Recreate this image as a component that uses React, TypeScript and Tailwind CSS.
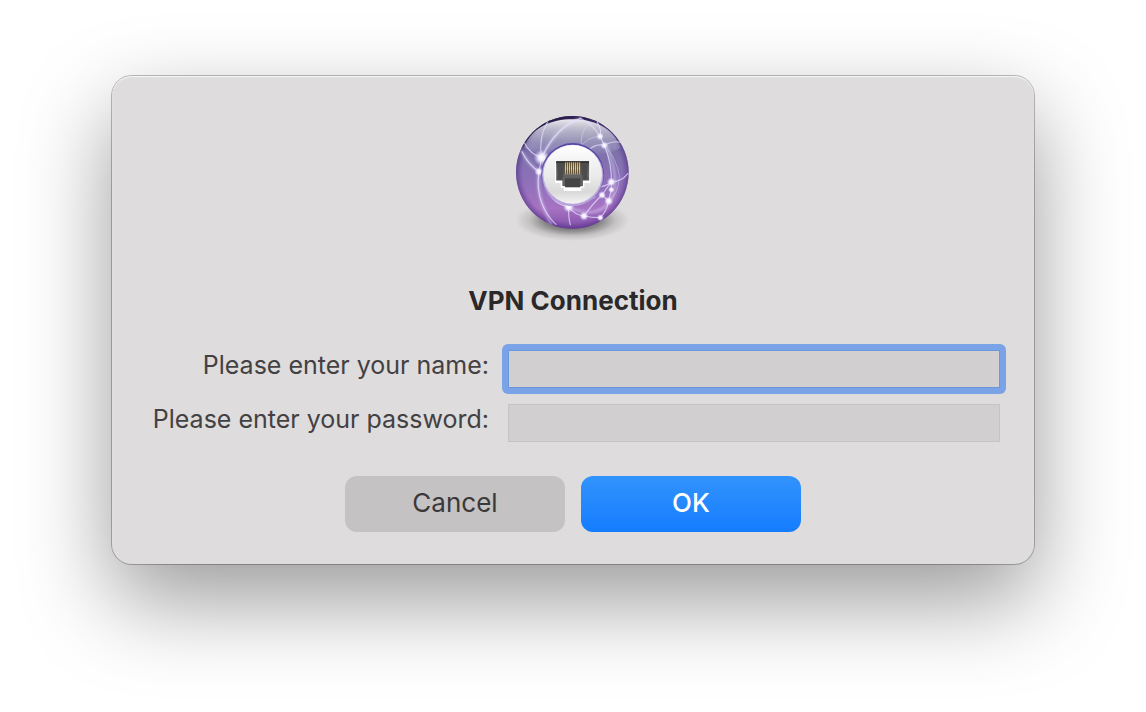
import React, { useState } from 'react';

const NetworkIcon: React.FC = () => (
  <svg viewBox="3 -3 432 432" className="w-36 h-36" aria-hidden="true">
    <defs>
      <linearGradient id="ball" x1="0" y1="0" x2="0" y2="1">
        <stop offset="0" stopColor="#15132c" />
        <stop offset="0.1" stopColor="#38355c" />
        <stop offset="0.28" stopColor="#7a72a8" />
        <stop offset="0.55" stopColor="#8c70b8" />
        <stop offset="0.82" stopColor="#a673c2" />
        <stop offset="1" stopColor="#8350ab" />
      </linearGradient>
      <radialGradient id="rim" cx="0.5" cy="0.5" r="0.5">
        <stop offset="0.88" stopColor="#5d3a90" stopOpacity="0" />
        <stop offset="1" stopColor="#4d2c80" stopOpacity="0.6" />
      </radialGradient>
      <linearGradient id="gloss" x1="0" y1="0" x2="0" y2="1">
        <stop offset="0" stopColor="#fff" stopOpacity="0.9" />
        <stop offset="0.5" stopColor="#e4e2f2" stopOpacity="0.55" />
        <stop offset="1" stopColor="#c9c4e6" stopOpacity="0.05" />
      </linearGradient>
      <linearGradient id="plate" x1="0" y1="0" x2="0" y2="1">
        <stop offset="0" stopColor="#ffffff" />
        <stop offset="0.55" stopColor="#e9e9ea" />
        <stop offset="0.8" stopColor="#d9d9da" />
        <stop offset="1" stopColor="#f4f4f4" />
      </linearGradient>
      <linearGradient id="socket" x1="0" y1="0" x2="0" y2="1">
        <stop offset="0" stopColor="#4a4a4a" />
        <stop offset="0.5" stopColor="#6c6c6c" />
        <stop offset="1" stopColor="#4d4d4d" />
      </linearGradient>
      <linearGradient id="pin" x1="0" y1="0" x2="0" y2="1">
        <stop offset="0" stopColor="#e0a233" />
        <stop offset="0.5" stopColor="#f6cf70" />
        <stop offset="1" stopColor="#d09232" />
      </linearGradient>
      <radialGradient id="node">
        <stop offset="0" stopColor="#fff" />
        <stop offset="0.4" stopColor="#f6f2ff" stopOpacity="0.95" />
        <stop offset="1" stopColor="#e0d8ff" stopOpacity="0" />
      </radialGradient>
      <radialGradient id="ground">
        <stop offset="0" stopColor="#000" stopOpacity="0.7" />
        <stop offset="0.5" stopColor="#000" stopOpacity="0.38" />
        <stop offset="0.75" stopColor="#000" stopOpacity="0.12" />
        <stop offset="1" stopColor="#000" stopOpacity="0" />
      </radialGradient>
      <clipPath id="ballClip">
        <circle cx="217" cy="202" r="169" />
      </clipPath>
      <filter id="soft" x="-20%" y="-20%" width="140%" height="140%">
        <feGaussianBlur stdDeviation="3" />
      </filter>
    </defs>

    <ellipse cx="217" cy="346" rx="172" ry="62" fill="url(#ground)" />
    <circle cx="217" cy="202" r="169" fill="url(#ball)" />
    <circle cx="217" cy="202" r="169" fill="url(#rim)" />
    <g clipPath="url(#ballClip)">
      <path d="M48 33h338v70Q300 32 217 34T64 130Z" fill="#131129" fillOpacity="0.7" filter="url(#soft)" />
      <path d="M72 128C96 66 154 43 217 43s121 23 145 85c-45 28-96 20-145 16-50-4-100 12-145-16Z" fill="url(#gloss)" />

      {/* links between the nodes */}
      <g fill="none" stroke="#e6e0ff" strokeLinecap="round">
        <g strokeWidth="9" strokeOpacity="0.4" filter="url(#soft)">
          <path d="M125 158C150 105 185 58 242 40" />
          <path d="M117 200C105 270 140 325 153 358" />
          <path d="M66 140Q84 178 117 200" />
          <path d="M206 306Q290 345 330 288Q365 235 320 125" />
        </g>
        <g strokeWidth="3.5" strokeOpacity="0.75">
          <path d="M125 158C118 120 126 80 142 52" />
          <path d="M125 158C150 105 185 58 242 40" />
          <path d="M125 158Q90 148 72 112" />
          <path d="M125 158L117 200" />
          <path d="M66 140Q84 178 117 200" />
          <path d="M117 200C106 270 132 325 168 358" />
          <path d="M128 215C130 260 160 296 206 306" />
          <path d="M300 94Q276 55 240 40" />
          <path d="M300 94Q306 76 292 52" />
          <path d="M300 94L313 121" />
          <path d="M313 121Q285 114 264 138" />
          <path d="M313 121Q340 106 362 112" />
          <path d="M313 121Q336 175 334 231" />
          <path d="M334 231Q365 230 384 205" />
          <path d="M334 231Q318 245 290 246" />
          <path d="M334 231L334 254L326 288" />
          <path d="M334 231L306 270L326 288" />
          <path d="M306 270Q280 294 252 333" />
          <path d="M206 306Q224 330 252 333" />
          <path d="M206 306Q205 340 211 359" />
          <path d="M252 333Q275 338 300 338" />
          <path d="M326 288Q320 320 300 338" />
        </g>
        <g strokeWidth="2.5" strokeOpacity="0.5">
          <path d="M244 124Q240 75 270 54" />
          <path d="M300 94Q260 96 244 124" />
          <path d="M313 121Q350 160 358 212Q356 270 326 288" />
          <path d="M164 288Q205 325 288 276" />
        </g>
      </g>

      <g fill="url(#node)">
        <circle cx="125" cy="158" r="24" />
        <circle cx="117" cy="200" r="14" />
        <circle cx="300" cy="94" r="12" />
        <circle cx="313" cy="121" r="12" />
        <circle cx="334" cy="231" r="14" />
        <circle cx="334" cy="254" r="10" />
        <circle cx="306" cy="270" r="12" />
        <circle cx="326" cy="288" r="14" />
        <circle cx="206" cy="306" r="17" />
        <circle cx="252" cy="333" r="14" />
        <circle cx="301" cy="338" r="11" />
      </g>
    </g>

    {/* ethernet socket */}
    <circle cx="218" cy="208" r="94" fill="#5748a6" />
    <circle cx="218" cy="211" r="92" fill="#b9a4dc" />
    <circle cx="218" cy="208" r="88" fill="url(#plate)" />
    <path d="M165 168h106v66h-18v14h-9v10h-53v-10h-9v-14h-17Z" fill="#fff" />
    <path d="M168 168h100v59h-19v17h-9v4h-44v-4h-8v-17h-20Z" fill="#b5b5b5" />
    <path d="M169 169h98v57h-19v17h-8v3h-44v-3h-8v-17h-19Z" fill="url(#socket)" />
    <path d="M169 169h98v5h-98Z" fill="#333" />
    <path d="M173 174h18v50h-18Zm71 0h18v50h-18Z" fill="#4c4c4c" />
    <path d="M188 210h60v32h-60Z" fill="#626262" />
    <path d="M195 220h46v26h-46Z" fill="#454545" />
    <path d="M194 172h48v34h-48Z" fill="#4b4232" />
    {[195, 201, 207, 213, 219, 225, 231, 237].map(x => (
      <rect key={x} x={x} y="172" width="3.5" height="36" fill="url(#pin)" />
    ))}
  </svg>
);

interface FieldProps {
  id: string;
  label: string;
  type: string;
  value: string;
  onChange: (value: string) => void;
  autoFocus?: boolean;
}

const Field: React.FC<FieldProps> = ({ id, label, type, value, onChange, autoFocus }) => (
  <>
    <label htmlFor={id} className="text-right text-[25px] leading-[30px] whitespace-nowrap text-[#434142]">
      {label}
    </label>
    <div className="-m-1.5 p-1.5 rounded-md focus-within:bg-[#79a3e6]">
      <input
        id={id}
        type={type}
        value={value}
        autoFocus={autoFocus}
        onChange={(e) => onChange(e.target.value)}
        className="block w-full h-[38px] px-2 bg-[#d1cfd0] border border-[#c5c3c4] text-[#2a2829] caret-transparent outline-none focus:border-[#6b97dd]"
      />
    </div>
  </>
);

export default function App() {
  const [name, setName] = useState('');
  const [password, setPassword] = useState('');

  return (
    <main className="min-h-screen bg-white px-28 pt-[76px] pb-36 font-['Inter',sans-serif] text-[26px]">
      <form
        role="dialog"
        aria-labelledby="vpn-title"
        onSubmit={(e) => e.preventDefault()}
        className="flex flex-col items-center px-[34px] pt-7 pb-8 rounded-[20px] bg-[#dedcdd] shadow-[inset_0_1px_1px_rgba(255,255,255,0.8),0_0_0_1px_rgba(0,0,0,0.25),0_36px_90px_rgba(0,0,0,0.4)]"
      >
        <NetworkIcon />
        <h1 id="vpn-title" className="mt-9 leading-[34px] font-bold text-[#2a2829]">VPN Connection</h1>

        <div className="mt-8 w-full grid grid-cols-[343px_1fr] gap-x-[19px] gap-y-4">
          <Field id="name" label="Please enter your name:" type="text" value={name} onChange={setName} autoFocus />
          <Field id="password" label="Please enter your password:" type="password" value={password} onChange={setPassword} />
        </div>

        <div className="mt-[34px] flex gap-4">
          <button type="button" className="w-[220px] h-14 pb-1 rounded-xl bg-[#c4c2c3] text-[#3a3839]">
            Cancel
          </button>
          <button type="submit" className="w-[220px] h-14 pb-1 rounded-xl bg-linear-to-b from-[#3293fc] to-[#147cff] font-medium text-white">
            OK
          </button>
        </div>
      </form>
    </main>
  );
}
